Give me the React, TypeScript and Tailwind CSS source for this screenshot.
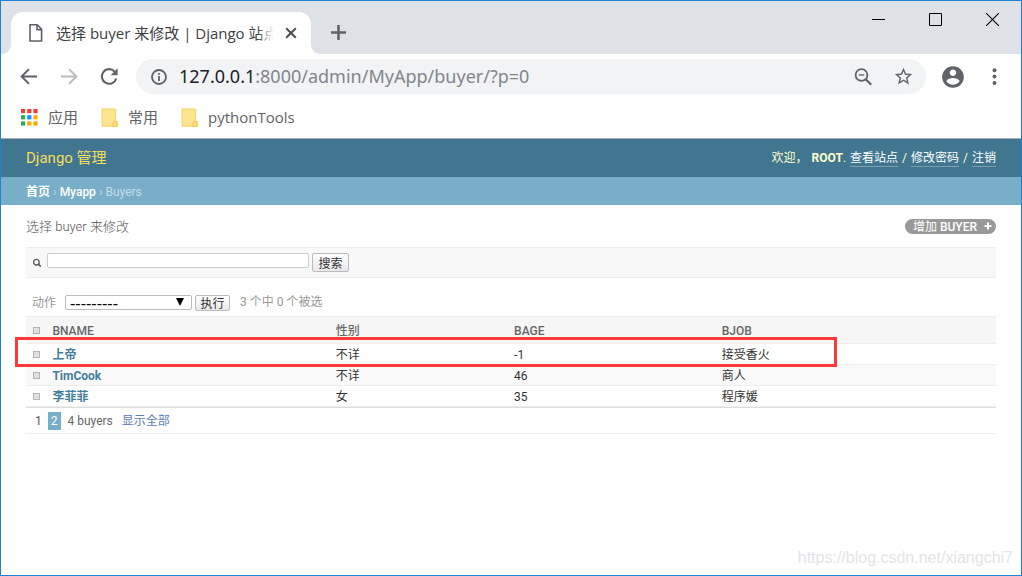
import type { ReactNode } from 'react'

type Buyer = {
  id: number
  name: string
  gender: string
  age: number
  job: string
}

const buyers: Buyer[] = [
  { id: 1, name: '上帝', gender: '不详', age: -1, job: '接受香火' },
  { id: 2, name: 'TimCook', gender: '不详', age: 46, job: '商人' },
  { id: 3, name: '李菲菲', gender: '女', age: 35, job: '程序媛' },
]

const appDots = [
  '#ea4335', '#ea4335', '#ea4335',
  '#34a853', '#1a8cff', '#fbab00',
  '#34a853', '#fbab00', '#fbab00',
]

function PageIcon() {
  return (
    <svg width="16" height="20" viewBox="0 0 16 20" fill="none" stroke="#5f6368" strokeWidth="1.6" className="shrink-0">
      <path d="M2 1.8h7.2L13.6 6.2V18H2z" />
      <path d="M9 2v4.6h4.6" />
    </svg>
  )
}

function FolderIcon() {
  return (
    <svg width="17" height="20" viewBox="0 0 17 20">
      <path d="M1 1h13.6v11.4l1.6 1.4v4.4H1.6L1 18z" fill="#ffe48f" stroke="#f5d364" />
      <path d="M12 18.6v-3.4l2.6-2.6 1.6 1.2v4.8z" fill="#fbdc74" stroke="#eec64e" strokeWidth=".8" />
    </svg>
  )
}

function AppsIcon() {
  return (
    <svg width="17" height="18" viewBox="0 0 17 18">
      {appDots.map((color, i) => (
        <rect key={i} x={(i % 3) * 6.2} y={Math.floor(i / 3) * 6.2} width="4.2" height="4.2" fill={color} />
      ))}
    </svg>
  )
}

function TabStrip() {
  return (
    <div className="flex h-[53px] items-end justify-between bg-[#dee1e6]">
      <div className="flex items-end">
        <svg width="10" height="10" viewBox="0 0 10 10" fill="#fff">
          <path d="M10 0v10H0C6 10 10 6 10 0z" />
        </svg>
        <div className="flex h-[42px] w-[300px] items-center rounded-t-xl bg-white pr-2.5 pl-[17px]">
          <PageIcon />
          <span className="relative ml-3 grow text-[15px] leading-6 whitespace-nowrap text-[#3c4043]">
            选择 buyer 来修改 | Django 站点
            <span className="absolute inset-y-0 right-0 w-6 bg-linear-to-r from-white/0 to-white to-70%" />
          </span>
          <button type="button" aria-label="Close tab" className="shrink-0 p-1">
            <svg width="12" height="12" viewBox="0 0 12 12" stroke="#4a4d51" strokeWidth="2">
              <path d="M1.2 1.2l9.6 9.6M10.8 1.2l-9.6 9.6" />
            </svg>
          </button>
        </div>
        <svg width="10" height="10" viewBox="0 0 10 10" fill="#fff">
          <path d="M0 0v10h10C4 10 0 6 0 0z" />
        </svg>
        <button type="button" aria-label="New tab" className="mb-3.5 ml-2.5">
          <svg width="15" height="15" viewBox="0 0 15 15" stroke="#5f6368" strokeWidth="2.6">
            <path d="M7.5 0v15M0 7.5h15" />
          </svg>
        </button>
      </div>
      <div className="flex gap-11 self-start pt-3 pr-[22px]">
        <button type="button" aria-label="Minimize">
          <svg width="13" height="13" viewBox="0 0 13 13" stroke="#000">
            <path d="M0 6.5h13" />
          </svg>
        </button>
        <button type="button" aria-label="Maximize">
          <svg width="13" height="13" viewBox="0 0 13 13" stroke="#000" fill="none">
            <path d="M.5 .5h12v12H.5z" />
          </svg>
        </button>
        <button type="button" aria-label="Close">
          <svg width="13" height="13" viewBox="0 0 13 13" stroke="#000" strokeWidth="1.1">
            <path d="M0 0l13 13M13 0L0 13" />
          </svg>
        </button>
      </div>
    </div>
  )
}

function Toolbar() {
  return (
    <div className="flex h-[45px] items-center pr-6 pl-[19px]">
      <button type="button" aria-label="Back">
        <svg width="18" height="18" viewBox="0 0 18 18" fill="none" stroke="#5f6368" strokeWidth="2">
          <path d="M17 8.5H2M9 1.1L1.6 8.5 9 15.9" />
        </svg>
      </button>
      <button type="button" aria-label="Forward" className="ml-[22px]">
        <svg width="18" height="18" viewBox="0 0 18 18" fill="none" stroke="#babcbe" strokeWidth="2">
          <path d="M1 8.5h15M9 1.1l7.4 7.4L9 15.9" />
        </svg>
      </button>
      <button type="button" aria-label="Reload" className="ml-[22px]">
        <svg width="18" height="18" viewBox="0 0 18 18" fill="none">
          <path d="M14.8 3.8A7.3 7.3 0 1 0 16.2 10.5" stroke="#5f6368" strokeWidth="2.1" />
          <path d="M17.6 .3v7h-7z" fill="#5f6368" />
        </svg>
      </button>
      <div className="ml-[18px] flex h-[35px] grow items-center rounded-full bg-[#f1f3f4] pr-3 pl-[15px]">
        <svg width="16" height="16" viewBox="0 0 16 16" fill="none" stroke="#5f6368">
          <circle cx="8" cy="8" r="7" strokeWidth="1.8" />
          <path d="M8 7v5M8 4v1.8" strokeWidth="1.8" />
        </svg>
        <span className="ml-3 grow pb-0.5 font-['Noto_Sans',sans-serif] text-lg leading-7 text-[#80868b]">
          <span className="text-[#202124]">127.0.0.1</span>:8000/admin/MyApp/buyer/?p=0
        </span>
        <button type="button" aria-label="Zoom">
          <svg width="18" height="18" viewBox="0 0 18 18" fill="none" stroke="#5f6368">
            <circle cx="7.5" cy="7" r="5.9" strokeWidth="1.8" />
            <path d="M4.7 7h5.6" strokeWidth="1.3" />
            <path d="M11.7 11.2l5.6 5.6" strokeWidth="2.2" />
          </svg>
        </button>
        <button type="button" aria-label="Bookmark" className="ml-[21px]">
          <svg width="21" height="21" viewBox="0 0 24 24" fill="#5f6368">
            <path d="M22 9.24l-7.19-.62L12 2 9.19 8.63 2 9.24l5.46 4.73L5.82 21 12 17.27 18.18 21l-1.63-7.03L22 9.24zM12 15.4l-3.76 2.27 1-4.28-3.32-2.88 4.38-.38L12 6.1l1.71 4.04 4.38.38-3.32 2.88 1 4.28L12 15.4z" />
          </svg>
        </button>
      </div>
      <button type="button" aria-label="Profile" className="ml-3.5">
        <svg width="26" height="26" viewBox="0 0 24 24" fill="#5f6368">
          <path d="M12 2C6.48 2 2 6.48 2 12s4.48 10 10 10 10-4.48 10-10S17.52 2 12 2zm0 3c1.66 0 3 1.34 3 3s-1.34 3-3 3-3-1.34-3-3 1.34-3 3-3zm0 14.2c-2.5 0-4.71-1.28-6-3.22.03-1.99 4-3.08 6-3.08 1.99 0 5.97 1.09 6 3.08-1.29 1.94-3.5 3.22-6 3.22z" />
        </svg>
      </button>
      <button type="button" aria-label="Menu" className="ml-[26px]">
        <svg width="5" height="18" viewBox="0 0 5 18" fill="#5f6368">
          <circle cx="2.5" cy="2.2" r="2" />
          <circle cx="2.5" cy="8.6" r="2" />
          <circle cx="2.5" cy="15" r="2" />
        </svg>
      </button>
    </div>
  )
}

function Bookmark({ icon, children }: { icon: ReactNode; children: ReactNode }) {
  return (
    <a href="#" className="flex items-center gap-2.5">
      {icon}
      {children}
    </a>
  )
}

function BookmarksBar() {
  return (
    <div className="flex h-10 items-center gap-[23px] border-b border-[#a9adb0] pb-0.5 pl-5 text-[15px] text-[#5f6368]">
      <Bookmark icon={<AppsIcon />}>应用</Bookmark>
      <Bookmark icon={<FolderIcon />}>常用</Bookmark>
      <Bookmark icon={<FolderIcon />}>pythonTools</Bookmark>
    </div>
  )
}

function AdminHeader() {
  return (
    <>
      <header className="flex h-[38px] items-center justify-between bg-[#417690] px-[25px] text-[#ffc]">
        <h1 className="text-[15px] text-[#f5dd5d]">Django 管理</h1>
        <div className="flex items-center gap-1 text-xs">
          <span>欢迎，</span>
          <span>
            <strong className="font-bold">ROOT</strong>.
          </span>
          <a href="#" className="border-b border-white/30 leading-4 text-white">查看站点</a>
          <span>/</span>
          <a href="#" className="border-b border-white/30 leading-4 text-white">修改密码</a>
          <span>/</span>
          <a href="#" className="border-b border-white/30 leading-4 text-white">注销</a>
        </div>
      </header>
      <nav className="flex h-7 items-center gap-[3px] bg-[#79aec8] px-[25px] pt-0.5 text-xs text-[#c4dce8]">
        <a href="#" className="font-bold text-white">首页</a>
        <span>›</span>
        <a href="#" className="font-medium text-white">Myapp</a>
        <span>›</span>
        <span>Buyers</span>
      </nav>
    </>
  )
}

function RowCheckbox({ label }: { label: string }) {
  return (
    <input
      type="checkbox"
      aria-label={label}
      className="mb-0.5 block size-[7px] appearance-none border border-[#b4b4b4] bg-[#e0e0e0]"
    />
  )
}

function SearchBar() {
  return (
    <form className="flex h-[31px] items-start border-y border-[#eee] bg-[#f8f8f8] pt-[5px] pl-1.5">
      <label htmlFor="searchbar" aria-label="Search" className="pt-[5px]">
        <svg width="10" height="10" viewBox="0 0 10 10" fill="none" stroke="#555" strokeWidth="1.3">
          <circle cx="4.4" cy="4.2" r="2.8" />
          <path d="M6.4 6.2l2.4 2.4" strokeWidth="1.6" />
        </svg>
      </label>
      <input
        id="searchbar"
        type="text"
        className="ml-[5px] h-[15px] w-[262px] rounded-xs border border-[#ccc] bg-white px-1 text-xs"
      />
      <button
        type="submit"
        className="ml-[3px] h-[19px] w-[37px] rounded-xs border border-[#bbb] bg-linear-to-b from-white to-[#e8e8e8] pt-0.5 text-xs leading-[17px] text-[#333]"
      >
        搜索
      </button>
    </form>
  )
}

function ActionsBar() {
  return (
    <form className="flex h-[38px] items-start pt-4 pl-1.5 text-xs text-[#999]">
      <label htmlFor="action" className="leading-[19px]">动作</label>
      <div className="relative ml-[9px] pt-px">
        <select
          id="action"
          className="block h-[15px] w-[127px] appearance-none rounded-xs border border-[#bbb] bg-white pl-1 font-['Liberation_Sans',sans-serif] text-base leading-[15px] text-black"
        >
          <option>---------</option>
          <option>删除所选的 buyers</option>
        </select>
        <svg width="8" height="8" viewBox="0 0 8 8" className="pointer-events-none absolute top-1 right-2">
          <path d="M0 0h8L4 8z" />
        </svg>
      </div>
      <div className="ml-[3px] pt-px">
        <button
          type="button"
          className="block h-4 w-[35px] rounded-xs border border-[#bbb] bg-linear-to-b from-white to-[#e8e8e8] text-xs leading-4 text-[#333]"
        >
          执行
        </button>
      </div>
      <span className="ml-2.5 leading-4">3 个中 0 个被选</span>
    </form>
  )
}

function BuyerTable() {
  return (
    <div className="relative">
      <table className="w-full table-fixed border-separate border-spacing-0 text-left text-xs leading-[18px] text-[#333]">
        <colgroup>
          <col className="w-[2%]" />
          <col className="w-[29.2%]" />
          <col className="w-[18.4%]" />
          <col className="w-[21.4%]" />
          <col />
        </colgroup>
        <thead>
          <tr className="bg-[#f6f6f6] text-[#666] [&>th]:border-y [&>th]:border-[#eee] [&>th]:px-[7px] [&>th]:pt-[5px] [&>th]:pb-[3px] [&>th]:font-medium">
            <th scope="col">
              <RowCheckbox label="Select all" />
            </th>
            <th scope="col">BNAME</th>
            <th scope="col">性别</th>
            <th scope="col">BAGE</th>
            <th scope="col">BJOB</th>
          </tr>
        </thead>
        <tbody>
          {buyers.map((buyer) => (
            <tr
              key={buyer.id}
              className="even:bg-[#f9f9f9] [&>td]:border-b [&>td]:border-[#eee] [&>td]:px-[7px] [&>td]:pt-0.5 [&>th]:border-b [&>th]:border-[#eee] [&>th]:px-[7px] [&>th]:pt-0.5"
            >
              <td>
                <RowCheckbox label={buyer.name} />
              </td>
              <th scope="row" className="font-bold">
                <a href="#" className="text-[#447e9b]">{buyer.name}</a>
              </th>
              <td>{buyer.gender}</td>
              <td>{buyer.age}</td>
              <td>{buyer.job}</td>
            </tr>
          ))}
        </tbody>
      </table>
      <div className="pointer-events-none absolute top-[21px] right-[159px] -left-[11px] h-[30px] border-3 border-[#fc3a3a]" />
    </div>
  )
}

function Paginator() {
  return (
    <div className="flex h-[27px] items-center border-t border-b border-t-[#ddd] border-b-[#eee] pl-[9px] text-xs text-[#666]">
      <a href="#" className="text-[#555]">1</a>
      <span className="mr-[7px] ml-1.5 bg-[#79aec8] px-[3px] leading-[18px] text-white">2</span>
      <span>4 buyers</span>
      <a href="#" className="ml-[9px] text-[#5b80b2]">显示全部</a>
    </div>
  )
}

export default function App() {
  return (
    <div className="relative flex min-h-screen flex-col border border-[#1d82d2] bg-white font-['Open_Sans','Noto_Sans_CJK_SC',sans-serif]">
      <TabStrip />
      <Toolbar />
      <BookmarksBar />
      <div className="font-[Roboto,'Noto_Sans_CJK_SC',sans-serif]">
        <AdminHeader />
        <main className="px-[25px]">
          <div className="flex h-[42px] items-center justify-between">
            <h2 className="pt-0.5 text-[13px] font-light text-[#555]">选择 buyer 来修改</h2>
            <a
              href="#"
              className="flex h-[15px] items-center gap-[7px] rounded-full bg-[#999] pr-1 pl-2 text-xs leading-[15px] text-white"
            >
              <span className="pt-0.5">
                增加 <span className="font-medium">BUYER</span>
              </span>
              <svg width="8" height="8" viewBox="0 0 8 8" stroke="#fff" strokeWidth="2">
                <path d="M4 .5v7M.5 4h7" />
              </svg>
            </a>
          </div>
          <SearchBar />
          <ActionsBar />
          <BuyerTable />
          <Paginator />
        </main>
      </div>
      <div className="absolute right-2 bottom-[7px] font-['Liberation_Sans',sans-serif] text-base leading-5 text-[#e4e4e4]">
        https://blog.csdn.net/xiangchi7
      </div>
    </div>
  )
}
